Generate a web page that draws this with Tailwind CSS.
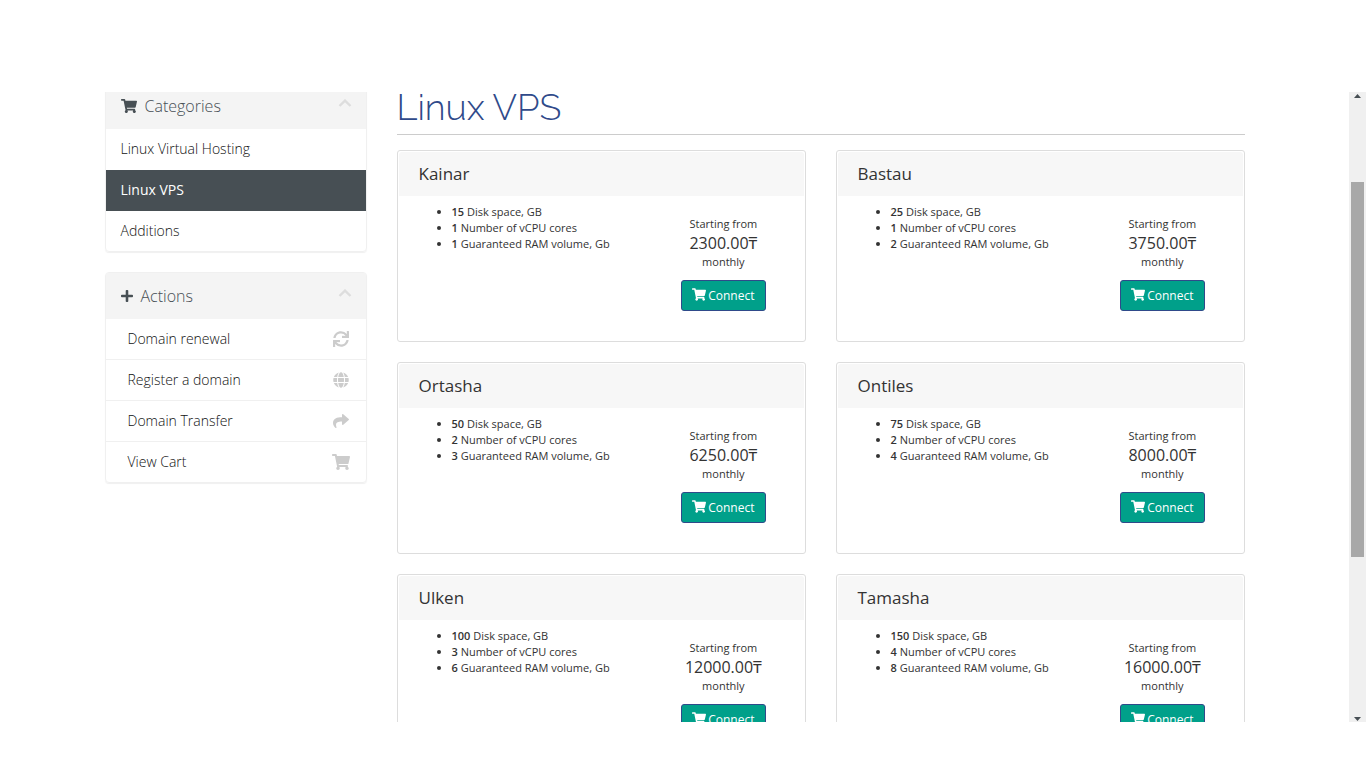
<!DOCTYPE html>
<html lang="en">
<head>
<meta charset="utf-8">
<title>Linux VPS</title>
<script src="https://cdn.jsdelivr.net/npm/@tailwindcss/browser@4"></script>
</head>
<body class="bg-white font-['Open_Sans','Noto_Sans',sans-serif] text-[#333]">
<svg class="hidden" aria-hidden="true">
  <symbol id="cart" viewBox="0 0 576 512"><path d="M528.12 301.319l47.273-208C578.806 78.301 567.391 64 551.99 64H159.208l-9.166-44.81C147.758 8.021 137.93 0 126.529 0H24C10.745 0 0 10.745 0 24v16c0 13.255 10.745 24 24 24h69.883l70.248 343.435C147.325 417.1 136 435.222 136 456c0 30.928 25.072 56 56 56s56-25.072 56-56c0-15.674-6.447-29.835-16.824-40h209.647C430.447 426.165 424 440.326 424 456c0 30.928 25.072 56 56 56s56-25.072 56-56c0-22.172-12.888-41.332-31.579-50.405l5.517-24.276c3.413-15.018-8.002-29.319-23.403-29.319H218.117l-6.545-32h293.145c11.206 0 20.92-7.754 23.403-18.681z"/></symbol>
  <symbol id="plus" viewBox="0 0 448 512"><path d="M416 208H272V64c0-17.67-14.33-32-32-32h-32c-17.67 0-32 14.33-32 32v144H32c-17.67 0-32 14.33-32 32v32c0 17.67 14.33 32 32 32h144v144c0 17.67 14.33 32 32 32h32c17.67 0 32-14.33 32-32V304h144c17.67 0 32-14.33 32-32v-32c0-17.67-14.33-32-32-32z"/></symbol>
  <symbol id="sync" viewBox="0 0 512 512"><path d="M440.65 12.57l4 82.77A247.16 247.16 0 0 0 255.83 8C134.73 8 33.91 94.92 12.29 209.82A12 12 0 0 0 24.09 224h49.05a12 12 0 0 0 11.67-9.26 175.91 175.91 0 0 1 317-56.94l-101.46-4.86a12 12 0 0 0-12.57 12v47.41a12 12 0 0 0 12 12H500a12 12 0 0 0 12-12V12a12 12 0 0 0-12-12h-47.37a12 12 0 0 0-11.98 12.57zM255.83 432a175.61 175.61 0 0 1-146-77.8l101.8 4.87a12 12 0 0 0 12.57-12v-47.4a12 12 0 0 0-12-12H12a12 12 0 0 0-12 12V500a12 12 0 0 0 12 12h47.35a12 12 0 0 0 12-12.6l-4.15-82.57A247.17 247.17 0 0 0 255.83 504c121.11 0 221.93-86.92 243.55-201.82a12 12 0 0 0-11.8-14.18h-49.05a12 12 0 0 0-11.67 9.26A175.86 175.86 0 0 1 255.83 432z"/></symbol>
  <symbol id="globe" viewBox="0 0 496 512"><path d="M336.5 160C322 70.7 287.8 8 248 8s-74 62.7-88.5 152h177zM152 256c0 22.2 1.2 43.5 3.3 64h185.3c2.1-20.5 3.3-41.8 3.3-64s-1.2-43.5-3.3-64H155.3c-2.1 20.5-3.3 41.8-3.3 64zm324.7-96c-28.6-67.9-86.5-120.4-158-141.6 24.4 33.8 41.2 84.7 50 141.6h108zM177.2 18.4C105.8 39.6 47.8 92.1 19.3 160h108c8.7-56.9 25.5-107.8 49.9-141.6zM487.4 192H372.7c2.1 21 3.3 42.5 3.3 64s-1.2 43-3.3 64h114.6c5.5-20.5 8.6-41.8 8.6-64s-3.1-43.5-8.5-64zM120 256c0-21.5 1.2-43 3.3-64H8.6C3.2 212.5 0 233.8 0 256s3.2 43.5 8.6 64h114.6c-2-21-3.2-42.5-3.2-64zm39.5 96c14.5 89.3 48.7 152 88.5 152s74-62.7 88.5-152h-177zm159.3 141.6c71.4-21.2 129.4-73.7 158-141.6h-108c-8.8 56.9-25.6 107.8-50 141.6zM19.3 352c28.6 67.9 86.5 120.4 158 141.6-24.4-33.8-41.2-84.7-50-141.6h-108z"/></symbol>
  <symbol id="share" viewBox="0 0 512 512"><path d="M503.691 189.836L327.687 37.851C312.281 24.546 288 35.347 288 56.015v80.053C127.371 137.907 0 170.1 0 322.326c0 61.441 39.581 122.309 83.333 154.132 13.653 9.931 33.111-2.533 28.077-18.631C66.066 312.814 132.917 274.316 288 272.085V360c0 20.7 24.3 31.453 39.687 18.164l176.004-152c11.071-9.562 11.086-26.753 0-36.328z"/></symbol>
  <symbol id="up" viewBox="0 0 14 8"><path d="M1.500 7L7 1.6L12.500 7" fill="none" stroke="currentColor" stroke-width="2.4"/></symbol>
</svg>
<div class="flex h-screen flex-col pt-[92px] pb-[46px]">
 <div class="flex min-h-0 flex-1">
  <div class="min-w-0 flex-1 overflow-hidden">
   <div class="mx-auto -mt-[10px] flex max-w-[1140px] gap-[30px]">
    <aside class="flex w-[262px] shrink-0 flex-col gap-5 text-sm leading-5 text-[#474f54]">
     <section class="rounded border border-[#f0f0f0] shadow-[0_1px_1px_#00000010]">
      <h3 class="flex h-[46px] items-center bg-[#f4f4f4] pr-[14px] pl-[15px] text-base font-light">
       <svg class="mr-2 h-4 w-4 fill-current"><use href="#cart"/></svg>Categories
       <button type="button" aria-label="Collapse categories" class="mb-[6px] ml-auto text-[#ddd]"><svg class="h-2 w-[14px]"><use href="#up"/></svg></button>
      </h3>
      <nav class="flex flex-col font-light text-[#111]">
       <a href="#" class="h-[41px] px-[15px] py-[10px]">Linux Virtual Hosting</a>
       <a href="#" class="h-[41px] bg-[#474f54] px-[15px] py-[10px] font-normal text-white">Linux VPS</a>
       <a href="#" class="h-10 px-[15px] py-[10px]">Additions</a>
      </nav>
     </section>
     <section class="rounded border border-[#f0f0f0] shadow-[0_1px_1px_#00000010]">
      <h3 class="flex h-[46px] items-center bg-[#f4f4f4] pr-[14px] pl-[15px] text-base font-light">
       <svg class="mr-2 h-[14px] w-[12px] fill-current"><use href="#plus"/></svg>Actions
       <button type="button" aria-label="Collapse actions" class="mb-[6px] ml-auto text-[#ddd]"><svg class="h-2 w-[14px]"><use href="#up"/></svg></button>
      </h3>
      <nav class="flex flex-col divide-y divide-[#f0f0f0] font-light text-[#111]">
       <a href="#" class="flex h-[41px] items-center justify-between pr-[17px] pl-[22px]">Domain renewal<svg class="h-4 w-4 fill-[#ccc]"><use href="#sync"/></svg></a>
       <a href="#" class="flex h-[41px] items-center justify-between pr-[17px] pl-[22px]">Register a domain<svg class="h-4 w-4 fill-[#ccc]"><use href="#globe"/></svg></a>
       <a href="#" class="flex h-[41px] items-center justify-between pr-[17px] pl-[22px]">Domain Transfer<svg class="h-4 w-4 fill-[#ccc]"><use href="#share"/></svg></a>
       <a href="#" class="flex h-10 items-center justify-between pr-4 pl-[22px]">View Cart<svg class="h-4 w-[18px] fill-[#ccc]"><use href="#cart"/></svg></a>
      </nav>
     </section>
    </aside>
    <main class="min-w-0 flex-1">
     <h1 class="mb-[15px] border-b border-[#ccc] pt-[7px] pb-[9px] font-[Raleway,Lato,sans-serif] text-[36px] leading-[36px] font-light text-[#2f4a8a]">Linux VPS</h1>
     <div id="plans" class="grid grid-cols-2 gap-x-[30px] gap-y-5"></div>
    </main>
   </div>
  </div>
  <div class="flex w-[17px] shrink-0 flex-col items-center bg-[#f0f0f0]" aria-hidden="true">
   <svg class="h-[90px] w-[17px] shrink-0 fill-[#474f54]" viewBox="0 0 17 90"><path d="M5 6L8.500 2L12 6z"/></svg>
   <div class="h-[375px] w-[13px] bg-[#a8a8a8]"></div>
   <svg class="mt-auto h-[17px] w-[17px] shrink-0 fill-[#474f54]" viewBox="0 0 17 17"><path d="M5 12L8.500 16L12 12z"/></svg>
  </div>
 </div>
</div>
<template id="plan">
 <article class="h-48 rounded-[3px] border border-[#ddd] p-px">
  <header class="flex h-11 items-center rounded-t-[3px] bg-[#f7f7f7] px-5 text-[17px]"></header>
  <div class="flex justify-between pt-2 pr-[38px] pl-[53px] text-[11px] leading-4">
   <ul class="list-outside list-disc"></ul>
   <div class="flex flex-col items-center pt-3">
    <span>Starting from</span>
    <span class="price py-px text-base leading-5"></span>
    <span>monthly</span>
    <button type="button" class="mt-[10px] flex h-[31px] items-center gap-[2px] rounded-[3px] border border-[#2f4a8a] bg-[#00a08a] px-[10px] text-[12px] text-white"><svg class="mb-[2px] h-[13px] w-[14px] fill-current"><use href="#cart"/></svg>Connect</button>
   </div>
  </div>
 </article>
</template>
<script>
const plans = [
  ['Kainar', 15, 1, 1, '2300.00₸'], ['Bastau', 25, 1, 2, '3750.00₸'],
  ['Ortasha', 50, 2, 3, '6250.00₸'], ['Ontiles', 75, 2, 4, '8000.00₸'],
  ['Ulken', 100, 3, 6, '12000.00₸'], ['Tamasha', 150, 4, 8, '16000.00₸'],
];
const labels = ['Disk space, GB', 'Number of vCPU cores', 'Guaranteed RAM volume, Gb'];
for (const [name, disk, cpu, ram, price] of plans) {
  const card = document.getElementById('plan').content.cloneNode(true);
  card.querySelector('header').textContent = name;
  card.querySelector('.price').textContent = price;
  card.querySelector('ul').innerHTML = [disk, cpu, ram]
    .map((n, i) => `<li><span class="font-semibold">${n}</span> ${labels[i]}</li>`).join('');
  document.getElementById('plans').append(card);
}
</script>
</body>
</html>
